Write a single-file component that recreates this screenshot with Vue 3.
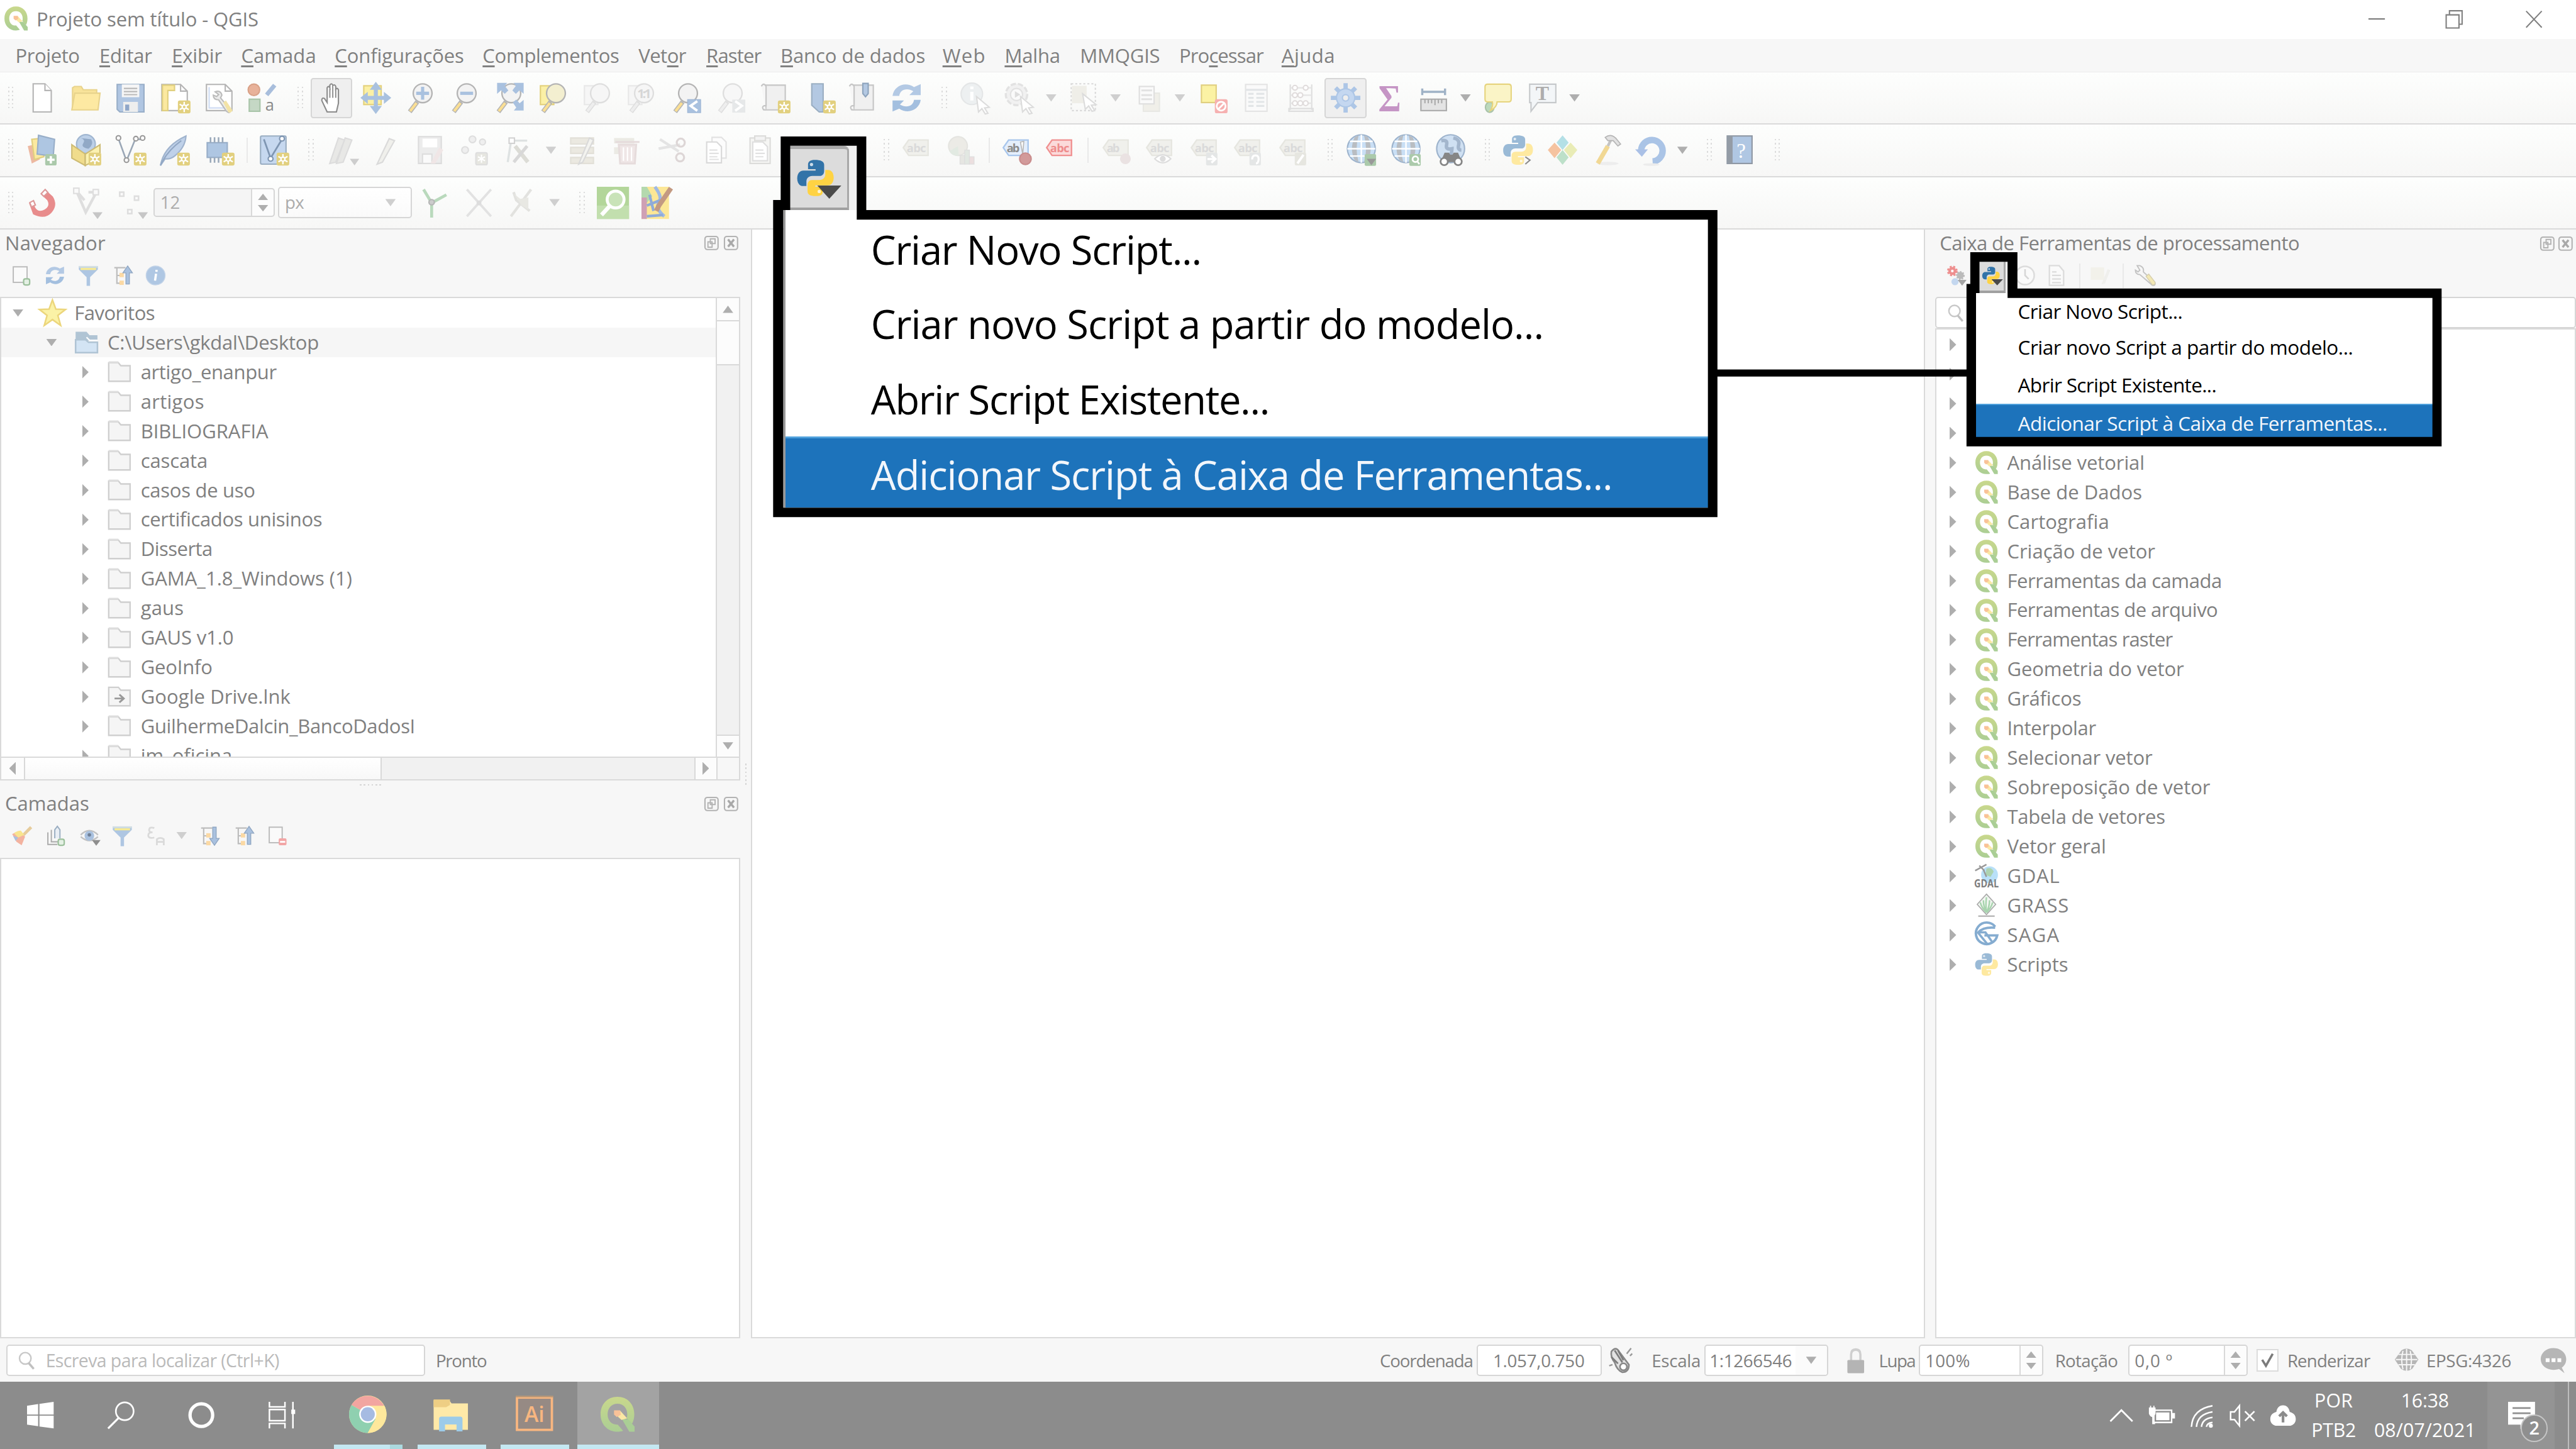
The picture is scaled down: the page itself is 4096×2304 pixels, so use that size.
<script setup>
import { h } from 'vue'

/* ---------- text fitting ---------- */
const ctx = document.createElement('canvas').getContext('2d')
const natural = (t) => {
  ctx.font = '400 100px "Open Sans"'
  return ctx.measureText(t).width / 100
}
// Single line of text tracked so that its glyphs span `w` pixels.
const Label = ({ text, w, size = 11.9, u = -1 }) => {
  const full = w + size * 0.1
  const ls = (full / size - natural(text)) / text.length
  const kids = u < 0 ? text : [text.slice(0, u), h('u', text[u]), text.slice(u + 1)]
  return h('span', { style: { fontSize: size + 'px', letterSpacing: ls + 'em', width: full + 'px', marginLeft: -size * 0.06 + 'px' } }, kids)
}
Label.props = ['text', 'w', 'size', 'u']

/* ---------- icons (24 × 24 grid) ---------- */
const star = '<rect x="14" y="14" width="9.4" height="9.6" rx="1.4" fill="#e2d07f"/><path d="M18.7 15v7.6M15.3 16.8l6.8 4M22.1 16.8l-6.8 4" stroke="#fff" stroke-width="1.1"/><circle cx="18.7" cy="18.8" r="1.5" fill="#e2d07f" stroke="#fff"/>'
const lens = (c = '#b4b4b4', f = '#f3f3f3', hd = '#fbdf93') =>
  `<path d="M9.6 15L4 22.4" stroke="${c}" stroke-width="3.4"/><path d="M9 15.8L4.3 21.9" stroke="${hd}" stroke-width="2"/><circle cx="13.6" cy="8.6" r="7" fill="${f}" stroke="${c}" stroke-width="1.1"/>`
const tag = (s, f, t, txt = 'abc') =>
  `<path d="M6 4.5h14.5v11.5H6L2 10.2z" fill="${f}" stroke="${s}" stroke-width="1.1"/><text x="4.6" y="13.6" font-size="8.6" font-weight="700" fill="${t}" textLength="${txt.length * 4.8}" font-family="Open Sans, sans-serif">${txt}</text>`
const dim = tag('#e6e6e0', '#f0f0ec', '#dadada')
const page = '<path d="M5.500 1.500h8.800l4.700 5v16H5.500z" fill="#fff" stroke="#b5b5b5"/><path d="M14.300 1.500v5h4.700" fill="#fff" stroke="#b5b5b5"/>'
const refresh = '<path d="M1.500 10.500C2.500 3 11-.5 17.500 4L22.500 1.800V10h-8.500l3-3C12 4 7 6 6.500 10.500z" fill="#b3c9e4"/><path d="M22.500 13.500C21.500 21 13 24.500 6.500 20L1.500 22.200V14H10l-3 3c5 3 10 1 10.500-3.500z" fill="#a3bfdf"/>'
const globe = '<circle cx="12" cy="11" r="10.400" fill="#c9dff5" stroke="#9db3cc"/><path d="M7 2.500q-4 8.500 0 17l3 1.500q-3-10 0-20zM17 2.500q4 8.500 0 17l-3 1.500q3-10 0-20z" fill="#b9bdc2"/><path d="M12 .6v20.800M1.600 11h20.800M3.500 5.500h17M3.500 16.500h17" stroke="#fff" stroke-width="1.100"/>'
const python = (a, b) => `<path d="M11.800 1C8.200 1 7.600 2.500 7.600 4v2.600h4.600v.9H4.800C2.500 7.500 1 9.300 1 12.200s1.300 4.700 3.600 4.700h2v-2.700c0-2 1.500-3.400 3.500-3.400h4.500c1.800 0 2.800-1.300 2.800-3V4c0-2-2-3-5.600-3z" fill="${a}"/><circle cx="9.700" cy="3.800" r="1" fill="#fff" fill-opacity=".75"/><path d="M12.400 23c3.600 0 4.200-1.500 4.200-3v-2.600H12v-.9h7.400c2.300 0 3.800-1.800 3.800-4.700s-1.300-4.700-3.600-4.700h-1.500v2.700c0 2-1.500 3.400-3.500 3.400h-4.500c-1.800 0-2.800 1.300-2.800 3V20c0 2 1.500 3 5.100 3z" fill="${b}"/><circle cx="14.400" cy="20.200" r="1" fill="#fff" fill-opacity=".75"/>`
const qgis = '<path d="M12 .8C5.500.8 1.200 5.600 1.200 12s4.300 11.200 10.800 11.200c1.600 0 2.600-.2 3.600-.6l-3.400-4C8.200 18.900 5.700 16 5.700 12S8.200 5.200 12 5.200s6.300 2.800 6.300 6.800c0 1-.1 1.700-.4 2.500l3.400 3.600c1-1.600 1.500-3.700 1.500-6.100C22.800 5.600 18.500.8 12 .8z" fill="url(#qg)"/><path d="M14.600 14.600l4.500.8L23 20v3.200h-3.400z" fill="#aace95"/><path d="M10.200 9.800h3.600l4.400 4.800-3.600 1-2-1.800z" fill="#fbe8a4"/><path d="M9.800 9.500h3.900l.5 2.800-2.600 1.500-1.800-1.600z" fill="#f9c298"/>'
const treeIcon = (arrow) => `<path d="M2 3h13M5 3v18h4M5 12h4" stroke="#bdbdbd" stroke-width="1.600" fill="none"/><rect x="8" y="9" width="5" height="5" fill="#fbd9a4"/><rect x="8" y="18" width="5" height="5" fill="#fbd9a4"/>${arrow}`
const arrowUp = '<path d="M17.500 1l5.500 8h-3.500v13h-4V9H12z" fill="#a9c1df" stroke="#8fa6c2"/>'
const arrowDown = '<path d="M17.500 23l5.500-8h-3.500V2h-4v13H12z" fill="#a9c1df" stroke="#8fa6c2"/>'
const funnel = '<path d="M1 1h22v4l-9 9v10h-4V14L1 5z" fill="#aec6e2"/><path d="M1 1h22v2H1z" fill="#d3dfe2"/><path d="M3 3.300h18v2.400H3z" fill="#f7ea94"/>'
const book = '<path d="M5 2.500h14.500v18.500H5z" fill="#f0f0f0" stroke="#c6c6c6"/><path d="M1.700 3.400q1.700-3.200 3.500 0v14.500H3.600q-1.900.8-.2 3H5" fill="#f6f6f6" stroke="#c6c6c6"/>'
const I = {
  qgis,
  new: page,
  open: '<path d="M2.500 20V4.500l1.500-1h5l1.500 2.500h10v4" fill="#f8e39a" stroke="#e8d38c"/><path d="M2 21L4.200 8.500H23L21.500 21z" fill="#fde9a2" stroke="#e8d38c"/>',
  save: '<path d="M2 2h20v20.500H4L2 20.500z" fill="#b0c6e2" stroke="#98aec8"/><rect x="5.500" y="2" width="13" height="9.500" fill="#f6f6f6"/><path d="M7 5h10M7 7.300h10M7 9.600h10" stroke="#b9b9b9"/><rect x="6.500" y="15" width="11" height="7.500" fill="#eee"/><rect x="8" y="17" width="3" height="4.500" fill="#8fa6c8"/>',
  layout: '<path d="M2 2h14l5 5v14.500H2z" fill="#fff" stroke="#b5b5b5"/><path d="M2.500 2.500h9v4h-5v15h-4z" fill="#fbe9a0" stroke="#e0cf7f"/><path d="M16 2v5h5" fill="none" stroke="#b5b5b5"/>' + star,
  manager: '<path d="M2 2h14l5 5v14.500H2z" fill="#fff" stroke="#b5b5b5"/><path d="M4 4v15.500h15" stroke="#cfdcf3" fill="none"/><path d="M16 2v5h5" fill="none" stroke="#b5b5b5"/><path d="M8.500 7.500q4-1.500 5 2.500l-1 2 7 8.500q1 2.500-1 2.500l-1.600-1-5.800-8.500q-4 0-4-3.500l2.500 1 1.500-1.500z" fill="#ececec" stroke="#bcbcbc"/><path d="M14.500 15.500l2-1.500 5 7.500-1.500 1.500h-1.500z" fill="#f3e3a6"/>',
  style: '<circle cx="5.500" cy="6" r="4.300" fill="#e8b29a" stroke="#d9a288"/><path d="M21 2.500l-6 7.300" stroke="#a8bedc" stroke-width="3.200"/><rect x="2" y="13" width="8" height="9" fill="#c5d8c5" stroke="#a8c4a8"/><text x="14" y="21.500" font-size="12" fill="#8a8a8a" font-family="Open Sans, sans-serif">a</text>',
  hand: '<path d="M7.500 22.500l-4-8.500q0-2.500 2-1.500l2 3V4.500q1-1.800 2 0v-2q1.200-2 2.200 0V3q1.300-1.500 2.200.5v2q1.300-1.300 2 .5V16l-1.500 6.500z" transform="translate(1.500 0)" fill="#fff" stroke="#8c8c8c"/><path d="M11 5v7M13.200 3.500V12M15.400 5v7" stroke="#8c8c8c" stroke-width=".9"/>',
  pan: '<rect x="3" y="3" width="13" height="14" fill="#fbf0a5" stroke="#e3d17c"/><path d="M12 0l4.500 6h-3v4.500H18v-3l5.500 4.500-5.500 4.500v-3h-4.500V18h3L12 24l-4.500-6h3v-4.500H6v3L.5 12 6 7.500v3h4.500V6h-3z" fill="#a9c1df"/>',
  zin: lens() + '<path d="M13.600 3.800v9.600M8.800 8.600h9.600" stroke="#a9c1df" stroke-width="2.400"/>',
  zout: lens() + '<path d="M8.800 8.600h9.600" stroke="#a9c1df" stroke-width="2.400"/>',
  zfull: lens() + '<path d="M3 .8h7.500L8.700 3l2.700 3.500L8.700 9 6 6.300 3 9zM22.800.8h-7.500L17 3l-2.600 3.500L17 9l2.800-2.700 3 2.700zM22.800 21.500h-7.300l1.800-2.300-2.600-3.700 2.600-2.300 2.500 2.800 3-2.500z" fill="#a9c1df"/>',
  zsel: '<rect x="2" y="3" width="10" height="14" fill="#fbf0a5" stroke="#e3d17c"/>' + lens('#b4b4b4', '#f3efd0'),
  zlayer: '<rect x="2" y="3" width="10" height="14" fill="#f6f6f6" stroke="#e8e8e8"/>' + lens('#dedede', '#f6f6f6', '#eee'),
  znative: '<rect x="2" y="3" width="10" height="14" fill="#f6f6f6" stroke="#e8e8e8"/>' + lens('#dedede', '#f6f6f6', '#eee') + '<text x="8.500" y="12" font-size="9.500" font-weight="700" fill="#d6d6d6" textLength="10.500" font-family="Open Sans, sans-serif">1:1</text>',
  zlast: lens() + '<rect x="13.300" y="13.300" width="9.700" height="9.700" fill="#a9c1df" stroke="#9fb7d5" stroke-width=".6"/><path d="M20.500 14.500L15.500 18l5 3.600" fill="none" stroke="#fff" stroke-width="1.800"/>',
  znext: lens('#dedede', '#f7f7f7', '#eee') + '<rect x="13.300" y="13.300" width="9.700" height="9.700" fill="#e6e8e9"/><path d="M15.500 14.500l5 3.500-5 3.600" fill="none" stroke="#fff" stroke-width="1.800"/>',
  newmap: book + star,
  newbm: '<path d="M5.500 1.500h8.500v21h-3l-5.500-5z" fill="#b3c8e2" stroke="#9aaec2"/>' + star,
  bms: book + '<path d="M11.700 1.200h4v7.600l-2 2.400-2-2.400z" fill="#b3c8e2" stroke="#8ea4bd"/>',
  refresh,
  ident: '<circle cx="9.500" cy="9" r="8" fill="#edf0f1" stroke="#e4e6e7"/><path d="M9.500 7.500v6.500M9.500 3.500v2" stroke="#fff" stroke-width="2.400"/><path d="M13 11l9.500 8-3.500.5 2.500 4-2 .5-2.500-4-2.500 2.500z" fill="#fff" stroke="#dcdcdc"/>',
  action: '<circle cx="10" cy="9.500" r="8" fill="#f1f1f1" stroke="#e2e2e2" stroke-width="1.600" stroke-dasharray="4 1.500"/><circle cx="10" cy="9.500" r="4.500" fill="#fafafa" stroke="#e2e2e2"/><path d="M8.800 7l4 2.500-4 2.500z" fill="#ddd"/><path d="M13 11l9.500 8-3.500.5 2.500 4-2 .5-2.500-4-2.500 2.500z" fill="#fff" stroke="#dcdcdc"/>',
  select: '<rect x="2.500" y="1.500" width="18" height="20" fill="none" stroke="#d9d9d9" stroke-dasharray="1.500 1.500"/><rect x="3" y="3" width="11" height="13" fill="#efeee8"/><path d="M11 9l10 8-3.500.5 2.500 4-2 .5-2.500-4-2.500 2.500z" fill="#fff" stroke="#dcdcdc"/>',
  selval: '<rect x="7.500" y="8.500" width="12" height="13.500" fill="#f0efe9" stroke="#e8e8e4"/><rect x="4.500" y="3.500" width="11" height="13" fill="#fafafa" stroke="#dfdfdf"/><path d="M6 6.500h8M6 10h8M6 13h8" stroke="#e2e2e2" stroke-width="1.400"/>',
  desel: '<rect x="2.500" y="2.500" width="11" height="13" fill="#fbf2a4" stroke="#e0cf7f"/><rect x="12.500" y="13" width="9.500" height="10.500" rx="1.500" fill="#f6b1b1"/><circle cx="17.200" cy="18.200" r="3.300" fill="none" stroke="#fff" stroke-width="1.300"/><path d="M15 20.500l4.500-4.600" stroke="#fff" stroke-width="1.300"/>',
  table: '<rect x="4" y="2" width="16" height="20" fill="#fafafa" stroke="#e4e4e4"/><path d="M4 6h16M6 9h4M12 9h6M6 12h4M12 12h6M6 15h4M12 15h6M6 18h4M12 18h6" stroke="#e2e5e7" stroke-width="1.500"/>',
  abacus: '<path d="M4.500 2v19M20.500 2v19M3.500 22h18v-2h-18z" fill="none" stroke="#dedede"/><path d="M4.500 4.500h16M4.500 10h16M4.500 16h16" stroke="#e5e5e5"/><g fill="#fff" stroke="#e0dcdc"><circle cx="8" cy="4.500" r="1.800"/><circle cx="16" cy="4.500" r="1.800"/><circle cx="8" cy="10" r="1.800"/><circle cx="12" cy="10" r="1.800"/><circle cx="8" cy="16" r="1.800"/><circle cx="12" cy="16" r="1.800"/><circle cx="16" cy="16" r="1.800"/></g>',
  gear: '<g stroke="#adc6e6" stroke-width="3.200"><path d="M12 1v22M1 12h22M4.500 4.500l15 15M19.500 4.500l-15 15"/></g><circle cx="12" cy="12" r="6.800" fill="#c4d7f0" stroke="#adc6e6"/><circle cx="12" cy="12" r="2.400" fill="#eee" stroke="#adc6e6"/>',
  sigma: '<text x="4" y="21.800" font-size="29" font-weight="700" fill="#c595c5" textLength="17" lengthAdjust="spacingAndGlyphs" font-family="Liberation Serif, serif">Σ</text>',
  ruler: '<path d="M3.500 7.500h17M3.500 5v5M20.500 5v5" stroke="#9fb2c6" stroke-width="1.600"/><rect x="2.500" y="13" width="19" height="8.500" fill="#e4e4e4" stroke="#ababab"/><path d="M5.500 13v3M8 13v3M10.500 13v3M13 13v4.500M15.500 13v3M18 13v3" stroke="#ababab"/>',
  tip: '<ellipse cx="5.500" cy="19" rx="3.200" ry="3.800" fill="#bcd9bc" stroke="#a9c2a9"/><path d="M4 1.800h15.500q2 0 2 2V13q0 2-2 2H11q0 4-5 6.500 2.200-3.500 1.500-6.500H4q-2 0-2-2V3.800q0-2 2-2z" fill="#faf4c6" stroke="#e6d47e"/>',
  ttext: '<path d="M2 1.800h19.500V15.500H8L3 22V15.500H2z" fill="#f3f6f8" stroke="#c6c9cb"/><text x="6.400" y="13.600" font-size="15" font-weight="700" fill="#adadad" font-family="Liberation Serif, serif">T</text>',
  srcmgr: '<path d="M1 9l9-2v12l-6 3z" fill="#edb9a2"/><path d="M4 4l9-1v14l-7 2z" fill="#fbe9a0" stroke="#e0cf7f"/><path d="M9 1l12 3-1 12.500-12-1.500z" fill="#aec6e2" stroke="#98aec8"/><rect x="14" y="15" width="8.500" height="8.500" rx="1.200" fill="#abc9ab"/><path d="M18.200 16.500v5.500M15.500 19.200H21" stroke="#fff" stroke-width="1.700"/>',
  gpkg: '<circle cx="12" cy="7.500" r="7" fill="#bcd0e8" stroke="#a0b6d0"/><path d="M8 3q4 1 2 4t4 4q4-3 2-7" fill="#91a9c6"/><path d="M1.500 8l10 7v8.500l-10-5.500z" fill="#f0dc8c" stroke="#cdbb74"/><path d="M22.500 8l-11 7v8.500l11-5.500z" fill="#fbf1b1" stroke="#cdbb74"/>' + star,
  shp: '<path d="M2.500 3.500L8.500 20 15 4h5" fill="none" stroke="#9aa7b6" stroke-width="1.200"/><g fill="#fff" stroke="#9a9a9a"><circle cx="2.500" cy="3" r="1.700"/><circle cx="8.500" cy="19.500" r="1.700"/><circle cx="15.500" cy="3.500" r="1.700"/><circle cx="20.500" cy="3" r="1.700"/></g>' + star,
  spatialite: '<path d="M1.500 23.500Q4 9 20.500 1.500 20 10 12 16.500q-3 2.500-7 2z" fill="#bfd1e9" stroke="#9fb3cd"/><path d="M1.500 23.500Q6 13 17 5" fill="none" stroke="#91a7c4"/>' + star,
  virtual: '<rect x="3" y="6.500" width="15" height="11" fill="#aec6e2" stroke="#98aec8"/><path d="M5.500 2.500v4M8.500 2.500v4M11.500 2.500v4M14.500 2.500v4M5.500 17.500v4M8.500 17.500v4M11.500 17.500v4" stroke="#9aa9ba" stroke-width="1.200"/>' + star,
  vlayer: '<rect x="2" y="1.500" width="19" height="21" rx="1" fill="#c6d8ef" stroke="#9aaec2"/><path d="M4.500 4L9.500 18 18 4" fill="none" stroke="#7f96b2" stroke-width="1.300"/><circle cx="9.500" cy="18.500" r="1.800" fill="#fff" stroke="#7f96b2"/><circle cx="18" cy="3.500" r="1.800" fill="#fff" stroke="#7f96b2"/>' + star,
  edits: '<path d="M2 22L8.500 3l4.500 1.500L6.500 21zM7 22l6.500-19 5 1.500L12 21z" fill="#e8e8e6" stroke="#dcdcdc"/><path d="M17 18.500h7l-3.500 5z" fill="#cdcdcd"/>',
  pencil: '<path d="M4.500 22.500L13.500 3.500l4 1.500L8.500 21z" fill="#f0f0ec" stroke="#dadada"/>',
  savee: '<path d="M3 2h17v20H3z" fill="#ececec" stroke="#dcdcdc"/><rect x="6" y="3.500" width="11" height="6.500" fill="#fff"/><rect x="6" y="15" width="7" height="7" fill="#fafafa" stroke="#ddd"/><path d="M12 22l6.500-12 3 2-6 10z" fill="#f0e6e6"/>',
  addpt: '<g fill="#efefef" stroke="#dedede"><circle cx="9.500" cy="4" r="2.500"/><circle cx="17" cy="6" r="2.200"/><circle cx="4" cy="12" r="2.500"/><rect x="12" y="14" width="8.500" height="9" rx="1.200" fill="#e6e6e0"/></g><path d="M16.200 15.500v6M13.600 17l5.200 3M18.800 17l-5.200 3" stroke="#fff"/>',
  vertex: '<path d="M5 5L2.500 21M6 5h11" stroke="#dee2e2" stroke-width="1.600" fill="none"/><path d="M8 9l9.500 12" stroke="#dcdcd6" stroke-width="3"/><path d="M17 9L7 21" stroke="#d8d8d8" stroke-width="2.400"/><rect x="3.500" y="3" width="4" height="4" fill="#fff" stroke="#d2d2d2"/>',
  modify: '<path d="M3 3h17v4.500H3zM3 10h17v4.500H3zM3 17.500h17V22H3z" fill="#ebe9e1" stroke="#e2e0d8"/><path d="M9 22.500L17 3l3 1.500L12 21z" fill="#f3f3ef" stroke="#d9d9d9"/>',
  trash: '<path d="M3 3h15v4H3zM3 10h6v5H3z" fill="#ebeae4"/><path d="M4 6h18M6.500 8h13L18.500 22h-11z" fill="#efe6e6" stroke="#e6dcdc" stroke-width="1.400"/><path d="M10 10v10M13 10v10M16 10v10" stroke="#fff"/>',
  cut: '<path d="M3 4l14 9M2 11l16-3" stroke="#e4e4e4" stroke-width="2"/><circle cx="18.500" cy="6.500" r="3" fill="none" stroke="#ddd6d6" stroke-width="1.500"/><circle cx="18" cy="17.500" r="3" fill="none" stroke="#ddd6d6" stroke-width="1.500"/>',
  copy: '<path d="M9 2.500h7l3.500 3.500v12H9z" fill="#fcfcfc" stroke="#e2e2e2"/><path d="M5 6h7.500L16 9.500V21.500H5z" fill="#fff" stroke="#d9d9d9"/><path d="M7 12h6M7 14.500h7M7 17h6M7 19h7" stroke="#e2e2e2"/>',
  paste: '<rect x="4.500" y="3" width="15" height="19" fill="#f6f6f4" stroke="#dcdcda"/><rect x="8" y="1.500" width="8" height="3.500" fill="#f3f3f3" stroke="#dcdcda"/><path d="M6.500 6h7.500l3.500 3.500V20h-11z" fill="#fff" stroke="#dedede"/><path d="M8.500 12h6M8.500 14.500h7M8.500 17h6" stroke="#e2e2e2"/>',
  abc: dim,
  pie: '<circle cx="9.500" cy="9" r="7" fill="#ecebe6" stroke="#e4e4e0"/><path d="M9.500 9L3 13a7 7 0 0 0 7 3z" fill="#e2eae2"/><rect x="11" y="16" width="3.500" height="6.500" fill="#e6e6e2" stroke="#dedede" stroke-width=".6"/><rect x="14.500" y="12" width="3.500" height="10.500" fill="#e2e8e2" stroke="#dedede" stroke-width=".6"/><rect x="18" y="17" width="3.500" height="5.500" fill="#ecdfdf" stroke="#dedede" stroke-width=".6"/>',
  abpin: tag('#a8c6ec', '#e4eefb', '#8c8c8c', 'ab') + '<path d="M16.500 15L14.800 6l2.500-.5z" fill="#fff" stroke="#b8b8b8" stroke-width=".8"/><circle cx="18.500" cy="18.500" r="4.300" fill="#d29a9a" stroke="#c98c8c"/>',
  abcred: tag('#f09090', '#fbdada', '#ee8c8c'),
  lpin: tag('#e6e6e0', '#f0f0ec', '#dadada', 'ab') + '<circle cx="18.500" cy="18.500" r="4" fill="#eae2e2"/>',
  leye: dim + '<path d="M8 18.500q6-6 12 0-6 6-12 0z" fill="#fff" stroke="#ddd"/><circle cx="14" cy="18.500" r="2.200" fill="#ddd"/>',
  lmove: dim + '<rect x="13" y="14" width="8.500" height="9.500" rx="1" fill="#e4e6e6"/><path d="M14 18.700h5M17 16l3 2.700-3 2.800" stroke="#fff" stroke-width="1.600" fill="none"/>',
  lrot: dim + '<rect x="13" y="14" width="8.500" height="9.500" rx="1" fill="#e4e6e6"/><path d="M15 19q0-3 2.500-3t2.300 3-2 3" stroke="#fff" stroke-width="1.500" fill="none"/>',
  ledit: dim + '<rect x="13" y="14" width="8.500" height="9.500" rx="1" fill="#e6e6e0"/><path d="M15 22l4.500-6.500" stroke="#fff" stroke-width="1.800"/>',
  gdown: globe + '<rect x="14.500" y="15" width="8.500" height="8.800" rx="1" fill="#abcaab"/><path d="M16 18.500h7l-3.500 4.800z" fill="#999"/>',
  gfind: globe + '<rect x="14.500" y="15" width="8.500" height="8.800" rx="1" fill="#abcaab"/><circle cx="19" cy="18.800" r="2.100" fill="none" stroke="#fff" stroke-width="1.300"/><path d="M20.500 20.500l1.500 2" stroke="#fff" stroke-width="1.300"/>',
  gbin: '<circle cx="12" cy="11" r="10.400" fill="#cfe0f2" stroke="#9db3cc"/><path d="M5 5q5-1 4 3t4 3q0 5-4 7M14 3q5 1 4 5t2 4" fill="none" stroke="#a3b6cd" stroke-width="2.600"/><path d="M7.500 14h3.200l1 1.500h1.600l1-1.500h3.200l3 7H4.500z" fill="#868686"/><g fill="#fff" stroke="#868686" stroke-width="1.300"><circle cx="7.200" cy="20.600" r="2.700"/><circle cx="17.600" cy="20.600" r="2.700"/></g>',
  pycon: python('#9abad6', '#fee9a0') + '<path d="M17.500 17l3.500 2.500-3.500 3" fill="none" stroke="#8c8c8c"/>',
  plugin: '<path d="M12 1l4.500 5.500L12 12 7.500 6.500z" fill="#b4e0e6"/><path d="M6 6.500L11 12l-5 6-5-6z" fill="#f5c3a0"/><path d="M18 6.500L23 12l-5 6-5-6z" fill="#e9ecb6"/><path d="M12 12l4.500 5.500L12 23l-4.500-5.500z" fill="#bde0c9"/>',
  hammer: '<ellipse cx="12" cy="22" rx="8" ry="1.300" fill="#ededed"/><path d="M4.500 22L12 9" stroke="#f1d894" stroke-width="3.400"/><path d="M12 9l2.500-5" stroke="#c4c4c4" stroke-width="2"/><path d="M10 2.500Q15-1 19 4.500l2.500 3-2 1.500L16 5 12 5z" fill="#e2e2e2" stroke="#b5b5b5" stroke-width=".8"/>',
  undo: '<path d="M4.500 12A8 8 0 1 1 13 20.500" fill="none" stroke="#aac4e6" stroke-width="4.800"/><path d="M0 11.500h9.500L5 17z" fill="#aac0e6"/><ellipse cx="12" cy="22.800" rx="6" ry="1" fill="#ececec"/>',
  help: '<rect x="3" y="1.500" width="18.500" height="20.500" fill="#b0c7e3" stroke="#8f98a4"/><rect x="3" y="1.500" width="4" height="20.500" fill="#949ca6"/><text x="10" y="18" font-size="15.500" fill="#fff" font-family="Liberation Serif, serif">?</text>',
  magnet: '<path d="M5.500 15.500q2.500 4 7 1.500t2-7L9.700 5.500l3.600-3.200 5.400 5q4 6.500-1 12T4 20.500L1 12.300l3-1.600z" transform="translate(1 0)" fill="#e88c8c"/><path d="M11 5.200l3-3.200 2 2.200-3 3zM2.500 11.800l2.800-1.500 1.400 3.300L3.800 15z" fill="#fff" stroke="#d99"/>',
  snapv: '<path d="M3 3l7 16L18 4M3 3l6 7M12 4h8" fill="none" stroke="#dedede" stroke-width="2"/><g fill="#fafafa" stroke="#dedede"><rect x="1" y="1" width="4" height="4"/><rect x="15.500" y="2" width="4" height="4"/></g><path d="M15 19h7.500l-3.700 5z" fill="#c6c6c6"/>',
  snapd: '<g fill="#fafafa" stroke="#dedede" stroke-width="1.200"><rect x="3" y="4" width="3" height="3"/><rect x="14" y="7" width="3" height="3"/><rect x="9" y="17" width="3" height="3"/></g><path d="M16.500 19H24l-3.700 5z" fill="#c6c6c6"/>',
  topo: '<path d="M4 2l6 10v11M10 12l11-6" fill="none" stroke="#b9d9bc" stroke-width="2.200"/><circle cx="10" cy="11.500" r="2" fill="#ccc" stroke="#b5b5b5"/>',
  cross: '<path d="M3 2l18 20M21 2L3 22" stroke="#e2e2e2" stroke-width="1.800"/><circle cx="12" cy="12" r="1.800" fill="#ddd"/>',
  selfsnap: '<path d="M5 4l2 6 10 8M18 2L3 22" stroke="#e2e2df" stroke-width="2" fill="none"/><path d="M5 5l5 4 6-1v9l-5-3z" fill="#e8e8e3"/>',
  gmag: '<rect width="24" height="24" fill="#b3d69a"/><rect y="14" width="24" height="10" fill="#c2dfae"/><circle cx="14" cy="9.500" r="6.300" fill="#c9e3b8" stroke="#fff" stroke-width="2.200"/><path d="M9.500 14.500L3.500 21" stroke="#fff" stroke-width="3"/>',
  gmap: '<rect x="0" y="0" width="20.500" height="24" fill="#fce796"/><path d="M0 0h4l4 7-4 5H0z" fill="#b4d9ae"/><path d="M0 8h4v16H0z" fill="#cfa0b4"/><path d="M10 0q6 8 3 12t4 10" stroke="#9fb9e4" stroke-width="2.500" fill="none"/><path d="M4 14l10-4M6 6l3 12M4 22l12-1" stroke="#8fabd8" stroke-width="2" fill="none"/><path d="M22 1L13 14l-2 4" stroke="#c39a82" stroke-width="3.600"/>',
  addl: '<rect x="3" y="2" width="16" height="18" fill="#fafafa" stroke="#bababa" stroke-width="1.400"/><rect x="15" y="16" width="7" height="7" rx="2" fill="#e4f0e4" stroke="#9cc09c" stroke-width="1.600"/>',
  funnel, up: treeIcon(arrowUp), down: treeIcon(arrowDown),
  info: '<circle cx="12" cy="12" r="11" fill="#afc7e3" stroke="#c4d4e8"/><path d="M12.500 10l-1.200 8M13 5.500v2.400" stroke="#fff" stroke-width="2.600"/>',
  brush: '<path d="M23 2l-9 9" stroke="#e6cc9c" stroke-width="3.500"/><path d="M1 10q5-3 10-1l5 4-4 10-6-4z" fill="#f3b3a0"/><path d="M3 9q4-3 8-3l4 5-7 3z" fill="#f9e48e"/><path d="M2 12l6 2-3 4z" fill="#a9c1df"/>',
  group: '<path d="M3 8v14h11M7 5v14h11" fill="none" stroke="#aaa" stroke-width="1.400"/><path d="M11 15V5l3-4 3 4v10" fill="#e9eef4" stroke="#9aaec2" stroke-width="1.400"/><rect x="15" y="16" width="7" height="7" rx="2" fill="#e4f0e4" stroke="#9cc09c" stroke-width="1.600"/>',
  eye: '<path d="M1 11Q11 1 21 11M1 13q10 9 20 0" fill="none" stroke="#c2c2c2" stroke-width="1.800"/><circle cx="11" cy="12" r="5.600" fill="#a9c1df"/><circle cx="11" cy="11" r="2" fill="#6f7f95"/><path d="M14 17h10l-5 6.500z" fill="#8e8e8e"/>',
  eps: '<path d="M9 3Q3 1 3 5.500q0 2.500 4 2.500-5 0-5 3.500 0 4 7 2.500M12 23v-7q4-3 8 0v7M12 19h8" fill="none" stroke="#dadada" stroke-width="2"/>',
  removel: '<rect x="3" y="2" width="15" height="18" fill="#fafafa" stroke="#bababa" stroke-width="1.400"/><rect x="14" y="15" width="9" height="8" rx="1.500" fill="#f2a6a6"/><path d="M15.500 19h6" stroke="#fff" stroke-width="2"/>',
  gears: '<circle cx="8" cy="7" r="4.500" fill="#ee8f8f" stroke="#ee8f8f" stroke-width="3" stroke-dasharray="2 1.600"/><circle cx="8" cy="7" r="1.500" fill="#fff"/><circle cx="17" cy="12" r="4" fill="#bbb" stroke="#bbb" stroke-width="2" stroke-dasharray="1.500 1.500"/><circle cx="11" cy="19" r="4" fill="#c4d7ef"/><path d="M14 17h10l-5 6.500z" fill="#a5a5a5"/>',
  clock: '<circle cx="12" cy="12" r="10.300" fill="#fafafa" stroke="#dcdcdc" stroke-width="1.800"/><path d="M12 5v7l4 4" fill="none" stroke="#d6d6d6" stroke-width="1.800"/>',
  doc: '<path d="M4 1h11l5 6v16H4z" fill="#fafafa" stroke="#dcdcdc" stroke-width="1.600"/><path d="M7 8h5M7 12h10M7 16h10M7 20h10" stroke="#dcdcdc" stroke-width="1.600"/>',
  editp: '<rect x="1" y="3" width="15" height="14" fill="#f2f1ea"/><path d="M13 22L20 5l3 1-6 15z" fill="#efefec"/>',
  wrench: '<path d="M3 1l3 5-2 2-3-2q0 5 5 5L20 23q4 1 3-3L10 8q1-5-4-7z" fill="#f6f6f6" stroke="#c2c2c2" stroke-width="1.300"/><path d="M13 13l3-2.500 7 9q1 3.500-3 3z" fill="#f3e8b4" stroke="#d6cfae"/>',
  mag: '<circle cx="10.500" cy="9.500" r="6.800" fill="none" stroke="#c8c8c8" stroke-width="1.800"/><path d="M14.500 15l6 7" stroke="#c0c0c0" stroke-width="2.600"/>',
  starf: '<path d="M12 .5l3 8.200 8.600.3-6.800 5.300 2.500 8.900L12 18l-7.300 5.200 2.500-8.900L.4 9l8.600-.3z" fill="#fbf2a6" stroke="#ecd67c" stroke-width="1.400"/>',
  folder: '<path d="M1 21.500V2.500h10l2.500 3H23v16z" fill="#f5f5f5" stroke="#cfcfcf" stroke-width="1.500"/><path d="M1 2h10" stroke="#dedede" stroke-width="2"/>',
  folderb: '<path d="M1 1h11l3 3.500h8V10H1z" fill="#b0c4d4"/><path d="M1 22V9h10l3 2.500h9V22z" fill="#d3e4f4" stroke="#b0c4d4" stroke-width="1.600"/><path d="M12 6.500l3 3h8" fill="none" stroke="#fff" stroke-width="1.400"/>',
  folderl: '<path d="M1 21.500V2.500h10l2.500 3H23v16z" fill="#f5f5f5" stroke="#cfcfcf" stroke-width="1.500"/><path d="M7 14h8M12 10l4.500 4-4.500 4" fill="none" stroke="#999" stroke-width="1.900"/>',
  gdal: '<circle cx="15" cy="11" r="8.200" fill="#b9e0f8"/><path d="M12 5q5-2 7 3l-3 5-5-2z" fill="#add3b0"/><path d="M1 7L12 1M5 2l5 5M9 6l3 7" stroke="#999" stroke-width="1.500"/><text x="0" y="23.500" font-size="10.500" font-weight="700" fill="#7e7e7e" textLength="24" lengthAdjust="spacingAndGlyphs" font-family="Open Sans, sans-serif">GDAL</text>',
  grass: '<path d="M12 1l9 10-9 10L3 11z" fill="#f2f7f2" stroke="#a9a9a9"/><path d="M12 19q-1-7 0-15M12 19Q7 14 6 9M12 19q5-5 6-10M12 19q-3-6-3-12M12 19q3-6 3-12" stroke="#a8d4ae" stroke-width="1.500" fill="none"/><path d="M4 22.500h16" stroke="#bbb" stroke-width="1.600"/>',
  saga: '<path d="M20.500 4A10.500 10.500 0 1 0 22.500 12.500H10" fill="none" stroke="#85acd0" stroke-width="2.400"/><path d="M20.500 5Q9 4 4 9.500h7l7 10M4 10l9 11" fill="none" stroke="#85acd0" stroke-width="2.200"/>',
  py: python('#9abad6', '#fee9a0'),
  pyfull: python('#3273a8', '#ffd343'),
  compass: '<path d="M3 4q4-5 7 0l9 12q0 7-6 7-5-2-7-9-4-5-3-10z" fill="#e2e2e2" stroke="#888" stroke-width="1.500"/><path d="M6 3l7 11M3 9l6 6M9 3l5 9" stroke="#7d7d7d" stroke-width="1.600"/><circle cx="14" cy="18" r="3.200" fill="#fff" stroke="#888" stroke-width="1.500"/><path d="M17 6l4-5M20 8l2-2M1 17l3-1" stroke="#999" stroke-width="1.400"/>',
  lock: '<path d="M7 12V6.500q0-4.800 5-4.800t5 4.800V12" fill="none" stroke="#cfcfcf" stroke-width="2.400"/><rect x="3" y="11.500" width="18" height="12.300" rx="1" fill="#b4b4b4"/>',
  crs: '<path d="M7 2.500Q12-1 17 2.500l6.500 9-6 9q-5.500 4-11 0l-6-9z" fill="#b6b6b6"/><path d="M8.500 3q-2.500 9 0 18M15.500 3q2.500 9 0 18M4 6.500h16M1.500 11.500h21M4 16.500h16M12 1v22" stroke="#f7f7f7" stroke-width="1.200"/>',
  bubble: '<path d="M12 .8c6.500 0 11.500 4.500 11.500 10 0 3.500-1.500 6-4 7.700L22 23.500l-5-3.800q-2.500.8-5 .8C5.500 20.500.5 16.500.5 10.800S5.500.8 12 .8z" fill="#b6b6b6"/><path d="M5 10h3.500v3.500H5zM10.300 10h3.500v3.500h-3.500zM15.600 10H19v3.500h-3.400z" fill="#fff"/>',
  win: '<path d="M0 3.500L10 2v9.500H0zM11.200 1.800L24 0v11.500H11.200zM0 12.500h10V22L0 20.500zM11.200 12.500H24V24l-12.800-1.800z" fill="#fff"/>',
  tsearch: '<circle cx="15.500" cy="8.500" r="8" fill="none" stroke="#fff" stroke-width="1.500"/><path d="M10 14.500L.5 24" stroke="#fff" stroke-width="1.800"/>',
  cortana: '<circle cx="12" cy="12" r="10.200" fill="none" stroke="#fff" stroke-width="3"/>',
  tview: '<path d="M.8 0v4.500h14V0M.8 24v-4.500h14V24M.8 7h14v10H.8zM22 0v24" fill="none" stroke="#fff" stroke-width="1.400"/><rect x="20.500" y="7" width="3.500" height="4" fill="#fff"/>',
  chrome: '<circle cx="12" cy="12" r="12" fill="#fee89c"/><path d="M12 12L1.600 6A12 12 0 0 1 22.400 6.500z" fill="#f2a5a0"/><path d="M12 12L1.600 6A12 12 0 0 0 12 24l5-9z" fill="#8fd0b0"/><path d="M12 6.500h10.700A12 12 0 0 1 12 24l5-9z" fill="#fee89c"/><circle cx="12" cy="12" r="5.500" fill="#fff"/><circle cx="12" cy="12" r="4.500" fill="#a6bbe2"/>',
  explorer: '<path d="M1 3h10l1.500 2H23v17H1z" fill="#fee9a8"/><path d="M1 2.500h10.500V6L9 7.500H1z" fill="#eece84"/><path d="M4.500 23v-8q0-1.500 1.500-1.500h12q1.500 0 1.500 1.500v8h-3.800v-4.500H8.300V23z" fill="#9ccbe9"/>',
  ai: '<rect x=".8" y="1.300" width="22.400" height="20.700" fill="#968a84" stroke="#f8b680" stroke-width="1.500"/><path d="M0 .6h24" stroke="#b89878" stroke-width="1"/><text x="5.600" y="16.800" font-size="14" font-weight="600" fill="#f8b680" textLength="12.800" lengthAdjust="spacingAndGlyphs" font-family="Open Sans, sans-serif">Ai</text>',
  chev: '<path d="M2 17L12 7l10 10" fill="none" stroke="#fff" stroke-width="1.600"/>',
  batt: '<path d="M5 7h16v11H5z" fill="none" stroke="#fff" stroke-width="1.300"/><rect x="7" y="9" width="12" height="7" fill="#fff"/><path d="M22 10h1.500v4H22zM1 5h5v5q-1 2.500-2.500 2.500T1 10zM3 12h1v7h2M2 5V3M5 5V3" fill="#fff" stroke="#fff"/>',
  wifi: '<path d="M2 22Q3 6 21 3M6.500 22Q7.500 10.500 21 8.500M11 22q1-7.500 10-8.500M15.500 22q.5-3.500 5.500-4" fill="none" stroke="#fff" stroke-width="1.400"/><circle cx="19.500" cy="21" r="1.800" fill="#fff"/>',
  mute: '<path d="M1 8.500h3.500L9 3v18l-4.500-5.500H1z" fill="none" stroke="#fff" stroke-width="1.400"/><path d="M14 8l8.500 8.500M22.500 8L14 16.500" stroke="#fff" stroke-width="1.500"/>',
  cloud: '<path d="M12 2.500c3.500 0 5.500 2.500 6 6 3.500 1 5.500 3 5.500 6.500s-2.500 6-6 6H6.500c-3.500 0-6-2.500-6-6s2-5.500 5.500-6.500c.5-3.500 2.500-6 6-6z" fill="#fff"/><path d="M12 18V10M8.500 12.500L12 9l3.500 3.500" fill="none" stroke="#8c8c8c" stroke-width="2.400"/>',
  note: '<path d="M0 0h24v20h-9l-4 4v-4H0z" fill="#fff"/><path d="M4 5.500h16M4 10h16M4 14.500h10" stroke="#8f8f8f" stroke-width="1.500"/>',
  float: '<rect x="1" y="1" width="22" height="22" rx="4" fill="none" stroke="#b3b3b3" stroke-width="2.200"/><path d="M10 5h8v8h-8zM6 10h7v9H6z" fill="none" stroke="#b3b3b3" stroke-width="2"/>',
  close: '<rect x="1" y="1" width="22" height="22" rx="4" fill="none" stroke="#b3b3b3" stroke-width="2.200"/><path d="M7 6l10 12M17 6L7 18" stroke="#a9a9a9" stroke-width="3.600"/>',
  check: '<path d="M5 11l5 8L19 3" fill="none" stroke="#7b7b7b" stroke-width="3"/>',
}

/* ---------- strips: [kind, centre, width?] laid out one after the other ---------- */
const widths = { ':': 3.4, '|': 0.8, v: 6.4 }
const strip = (list, size = 19.6, origin = 0) => {
  let end = origin
  return list.map(([k, x, w]) => {
    const width = w || widths[k] || size
    const gap = x - width / 2 - end
    end = x + width / 2
    return { k, box: { width: width + 'px', marginLeft: gap + 'px' } }
  })
}
const toolbars = [
  strip([[':', 6.6], ['new', 25.4], ['open', 52], ['save', 79.3], ['layout', 106.5], ['manager', 133.8], ['style', 160], [':', 183], ['hand', 201.8, 25.4], ['pan', 228.9], ['zin', 255.9], ['zout', 282.900], ['zfull', 310], ['zsel', 337], ['zlayer', 363.9], ['znative', 390.7], ['zlast', 417.5], ['znext', 444.8], ['newmap', 472], ['newbm', 499.500], ['bms', 525.5], ['refresh', 552.2], [':', 575], ['ident', 593.6], ['action', 620.6], ['v', 640], ['select', 660], ['v', 679.2], ['selval', 699.8], ['v', 718.4], ['desel', 739.3], ['table', 765], ['abacus', 791.8], ['gear', 819.2, 25.8], ['sigma', 845.9], ['ruler', 872.9], ['v', 892.3], ['tip', 912.4], ['ttext', 939.5], ['v', 958.7]]),
  strip([[':', 6.6], ['srcmgr', 25.7], ['gpkg', 52.3], ['shp', 79.800], ['spatialite', 106.2], ['virtual', 133.500], ['|', 150.6], ['vlayer', 166.8], [':', 189.5], ['edits', 208.8], ['pencil', 235.7], ['savee', 262], ['addpt', 289.6], ['vertex', 316.8], ['v', 335.5], ['modify', 355], ['trash', 381.4], ['cut', 409.3], ['copy', 436], ['paste', 462.8], [':', 539.7], ['abc', 558], ['pie', 585.4], ['|', 602.5], ['abpin', 619], ['abcred', 645.5], ['|', 662.6], ['lpin', 679.8], ['leye', 706.3], ['lmove', 733.4], ['lrot', 760], ['ledit', 787.4], [':', 810], ['gdown', 829], ['gfind', 856], ['gbin', 883.2], [':', 905.6], ['pycon', 924.4], ['plugin', 951.5], ['hammer', 979], ['undo', 1005.3], ['v', 1024.4], [':', 1040.9], ['help', 1059.1], [':', 1082.2]]),
  strip([[':', 6.6], ['magnet', 25.7], ['snapv', 54], ['snapd', 80.3], ['spin', 130.4, 74], ['combo', 210, 81.4], ['topo', 264.500], ['cross', 291.7], ['selfsnap', 318.4], ['v', 337.6], [':', 354.5], ['gmag', 373.2], ['gmap', 400.3]]),
]
const active = ['hand', 'gear']
const navTools = strip([['addl', 12.9], ['refresh', 33.6], ['funnel', 53.8], ['up', 74.9], ['info', 94.8]], 12.6)
const layerTools = strip([['brush', 13.1], ['group', 34], ['eye', 55], ['funnel', 74.6], ['eps', 95.7], ['v', 110.6], ['down', 127.8], ['up', 148.6], ['removel', 168.8]], 12.6)
const boxTools = strip([['gears', 1190.5], ['clock', 1232.8], ['doc', 1251.8], ['|', 1266], ['editp', 1278.7], ['|', 1292.5], ['wrench', 1305.8]], 13, 1171.8)

const menu = [['Projeto', 10.1, 48, 3], ['Editar', 61.2, 92.1, 0], ['Exibir', 105.3, 134.7, 0], ['Camada', 147.5, 192, 0], ['Configurações', 204.5, 282, 0], ['Complementos', 294.5, 376.5, 0], ['Vetor', 389.4, 417.2, 3], ['Raster', 430.7, 462.9, 0], ['Banco de dados', 475.8, 562.8, 0], ['Web', 574.5, 599.8, 0], ['Malha', 612.3, 645, 0], ['MMQGIS', 658.2, 705.7, -1], ['Processar', 718.6, 768.6, 3], ['Ajuda', 780.9, 812.3, 0]]
  .map(([text, a, b, u]) => ({ text, a, w: b - a, u }))

const tree = [['artigo_enanpur', 81.5], ['artigos', 37.5], ['BIBLIOGRAFIA', 76.5], ['cascata', 39.5], ['casos de uso', 68.5], ['certificados unisinos', 109.300], ['Disserta', 42.5], ['GAMA_1.8_Windows (1)', 127.5], ['gaus', 25], ['GAUS v1.0', 55.300], ['GeoInfo', 42.500], ['Google Drive.lnk', 90], ['GuilhermeDalcin_BancoDadosI', 165.8], ['im_oficina', 54.5]]
const tools = [['', 0], ['', 0], ['', 0], ['', 0], ['Análise vetorial', 82.5], ['Base de Dados', 81], ['Cartografia', 61], ['Criação de vetor', 89], ['Ferramentas da camada', 129.5], ['Ferramentas de arquivo', 127], ['Ferramentas raster', 99.5], ['Geometria do vetor', 106.5], ['Gráficos', 44], ['Interpolar', 53], ['Selecionar vetor', 87.3], ['Sobreposição de vetor', 122.5], ['Tabela de vetores', 95], ['Vetor geral', 59], ['GDAL', 31], ['GRASS', 36.5], ['SAGA', 31], ['Scripts', 36]]
const toolIcon = { GDAL: 'gdal', GRASS: 'grass', SAGA: 'saga', Scripts: 'py' }
const actions = [['Criar Novo Script...', 99], ['Criar novo Script a partir do modelo...', 202.8], ['Abrir Script Existente...', 119.6], ['Adicionar Script à Caixa de Ferramentas...', 223.7]]
</script>

<template>
  <div class="screen">
    <svg class="defs"><defs><linearGradient id="qg" x1="0" y1="0" x2="0" y2="1"><stop offset="0" stop-color="#c9d88c" /><stop offset="1" stop-color="#abce94" /></linearGradient></defs></svg>

    <header class="title">
      <svg class="logo" viewBox="0 0 24 24" v-html="I.qgis" />
      <Label class="lbl" text="Projeto sem título - QGIS" :w="134" />
      <svg class="winbtns" viewBox="0 0 110 12"><path d="M0 5.800h10M47.300 3.300h7.800v8h-7.800zM49.300 3.300V.8h7.700v8.200h-1.900M96 1l9.500 10M105.500 1l-9.500 10" /></svg>
    </header>

    <nav class="menubar">
      <div v-for="(m, i) in menu" :key="m.text" class="entry" :style="{ marginLeft: m.a - (i ? menu[i - 1].a + menu[i - 1].w : 0) + 'px', width: m.w + 'px' }">
        <Label class="lbl" :text="m.text" :w="m.w" :u="m.u" />
      </div>
    </nav>

    <div v-for="(bar, b) in toolbars" :key="b" class="toolbar">
      <template v-for="(c, i) in bar" :key="i">
        <i v-if="c.k === ':'" class="handle" :style="c.box" />
        <i v-else-if="c.k === '|'" class="sep" :style="c.box" />
        <i v-else-if="c.k === 'v'" class="tri t-down" :class="{ pale: (b === 0 && i < 31) || (b === 1 && i < 20) || b === 2 }" :style="c.box" />
        <div v-else-if="c.k === 'spin'" class="field greyed" :style="c.box">
          <Label class="lbl soft" text="12" :w="11" :size="10.6" />
          <b class="steps"><i class="tri t-up" /><i class="tri t-down" /></b>
        </div>
        <div v-else-if="c.k === 'combo'" class="field combo" :style="c.box">
          <Label class="lbl soft" text="px" :w="10.5" :size="10.6" /><i class="tri t-down pale" />
        </div>
        <div v-else class="cell" :class="{ on: active.includes(c.k) }" :style="c.box"><svg viewBox="0 0 24 24" v-html="I[c.k]" /></div>
      </template>
    </div>

    <main class="work">
      <aside class="side-left">
        <div class="phead"><Label class="lbl" text="Navegador" :w="60" /><svg class="pb" viewBox="0 0 24 24" v-html="I.float" /><svg class="pb" viewBox="0 0 24 24" v-html="I.close" /></div>
        <div class="ptools">
          <svg v-for="c in navTools" :key="c.k" viewBox="0 0 24 24" :style="c.box" v-html="I[c.k]" />
        </div>
        <div class="browser">
          <div class="view">
            <div class="list">
              <div class="row r0"><i class="tri t-down" /><svg viewBox="0 0 24 24" v-html="I.starf" /><Label class="lbl" text="Favoritos" :w="47.8" /></div>
              <div class="row r1"><i class="tri t-down" /><svg viewBox="0 0 24 24" v-html="I.folderb" /><Label class="lbl" text="C:\Users\gkdal\Desktop" :w="127.5" /></div>
              <div v-for="t in tree" :key="t[0]" class="row r2"><i class="tri t-right" /><svg viewBox="0 0 24 24" v-html="t[0].endsWith('lnk') ? I.folderl : I.folder" /><Label class="lbl" :text="t[0]" :w="t[1]" /></div>
            </div>
            <div class="vbar"><b class="btn"><i class="tri t-up" /></b><b class="thumb" /><b class="groove" /><b class="btn end"><i class="tri t-down" /></b></div>
          </div>
          <div class="hbar"><b class="btn"><i class="tri t-left" /></b><b class="thumb" /><b class="groove" /><b class="btn end"><i class="tri t-right" /></b><b class="nook" /></div>
        </div>
        <div class="split"><i /></div>
        <div class="phead low"><Label class="lbl" text="Camadas" :w="50" /><svg class="pb" viewBox="0 0 24 24" v-html="I.float" /><svg class="pb" viewBox="0 0 24 24" v-html="I.close" /></div>
        <div class="ptools two">
          <template v-for="c in layerTools" :key="c.k">
            <i v-if="c.k === 'v'" class="tri t-down pale" :style="c.box" />
            <svg v-else viewBox="0 0 24 24" :style="c.box" v-html="I[c.k]" />
          </template>
        </div>
        <div class="layers" />
      </aside>
      <div class="vsplit"><i /></div>
      <section class="canvas" />
      <aside class="side-right">
        <div class="phead"><Label class="lbl" text="Caixa de Ferramentas de processamento" :w="217.8" /><svg class="pb" viewBox="0 0 24 24" v-html="I.float" /><svg class="pb" viewBox="0 0 24 24" v-html="I.close" /></div>
        <div class="ptools">
          <template v-for="(c, i) in boxTools" :key="i">
            <i v-if="c.k === '|'" class="sep" :style="c.box" />
            <svg v-else viewBox="0 0 24 24" :style="c.box" v-html="I[c.k]" />
          </template>
        </div>
        <div class="find"><svg viewBox="0 0 24 24" v-html="I.mag" /></div>
        <div class="algs">
          <div v-for="(t, i) in tools" :key="i" class="row r3"><i class="tri t-right" /><template v-if="t[0]"><svg viewBox="0 0 24 24" v-html="I[toolIcon[t[0]] || 'qgis']" /><Label class="lbl" :text="t[0]" :w="t[1]" /></template></div>
        </div>
      </aside>
    </main>

    <footer class="status">
      <div class="field locator"><svg viewBox="0 0 24 24" v-html="I.mag" /><Label class="lbl ghost" text="Escreva para localizar (Ctrl+K)" :w="141" :size="10.9" /></div>
      <Label class="lbl s-ready" text="Pronto" :w="29.7" :size="10.6" />
      <div class="grow" />
      <Label class="lbl" text="Coordenada" :w="55.6" :size="10.6" />
      <div class="field coord"><Label class="lbl" text="1.057,0.750" :w="54.7" :size="10.6" /></div>
      <svg class="i-compass" viewBox="0 0 24 24" v-html="I.compass" />
      <Label class="lbl" text="Escala" :w="28.7" :size="10.6" />
      <div class="field scale"><Label class="lbl" text="1:1266546" :w="49.2" :size="10.6" /><b><i class="tri t-down" /></b></div>
      <svg class="i-lock" viewBox="0 0 24 24" preserveAspectRatio="none" v-html="I.lock" />
      <Label class="lbl" text="Lupa" :w="21" :size="10.6" />
      <div class="field zoomf"><Label class="lbl" text="100%" :w="26.3" :size="10.6" /><b class="steps"><i class="tri t-up" /><i class="tri t-down" /></b></div>
      <Label class="lbl s-rot" text="Rotação" :w="37" :size="10.6" />
      <div class="field rotf"><Label class="lbl" text="0,0 º" :w="22.3" :size="10.6" /><b class="steps"><i class="tri t-up" /><i class="tri t-down" /></b></div>
      <div class="tick"><svg viewBox="0 0 24 24" v-html="I.check" /></div>
      <Label class="lbl" text="Renderizar" :w="49.3" :size="10.6" />
      <svg class="i-crs" viewBox="0 0 24 24" v-html="I.crs" />
      <Label class="lbl" text="EPSG:4326" :w="50.7" :size="10.6" />
      <svg class="i-bubble" viewBox="0 0 24 24" v-html="I.bubble" />
    </footer>

    <footer class="taskbar">
      <div class="sys"><svg v-for="n in ['win', 'tsearch', 'cortana', 'tview']" :key="n" viewBox="0 0 24 24" v-html="I[n]" /></div>
      <div v-for="n in ['chrome', 'explorer', 'ai', 'qgis']" :key="n" class="app" :class="n"><svg viewBox="0 0 24 24" v-html="I[n]" /></div>
      <div class="grow" />
      <div class="tray"><svg v-for="n in ['chev', 'batt', 'wifi', 'mute', 'cloud']" :key="n" viewBox="0 0 24 24" v-html="I[n]" /></div>
      <div class="two-lines lang"><Label class="lbl" text="POR" :w="22.3" :size="11.6" /><Label class="lbl" text="PTB2" :w="26" :size="11.6" /></div>
      <div class="two-lines time"><Label class="lbl" text="16:38" :w="28" :size="11.6" /><Label class="lbl" text="08/07/2021" :w="60.8" :size="11.6" /></div>
      <div class="notes"><svg viewBox="0 0 24 24" preserveAspectRatio="none" v-html="I.note" /><span class="count">2</span></div>
      <div class="peek" />
    </footer>

    <div class="drop big">
      <div class="tab"><div class="face"><svg viewBox="0 0 24 24" v-html="I.pyfull" /><i class="tri t-down" /></div></div>
      <ul><li v-for="a in actions" :key="a[0]"><Label class="lbl" :text="a[0]" :w="a[1] * 2.007" :size="24.2" /></li></ul>
    </div>
    <div class="drop small">
      <div class="tab"><div class="face"><svg viewBox="0 0 24 24" v-html="I.pyfull" /><i class="tri t-down" /></div></div>
      <ul><li v-for="a in actions" :key="a[0]"><Label class="lbl" :text="a[0]" :w="a[1]" :size="12.1" /></li></ul>
    </div>
    <svg class="ink" viewBox="0 0 1568 882">
      <path fill-rule="evenodd" d="M475.200 83.100H527.300V127.900H1045.400V314.800H470.600V121.700H475.200zM481 88.700V127.900H476.800V309H1039.600V133.700H521.500V88.700z" />
      <path fill-rule="evenodd" d="M1199.300 153.500H1228V175.600H1486.200V271.700H1197V172.800H1199.300zM1204.900 159.300V178.400H1202.800V266H1480.600V181.400H1222V159.300z" />
      <path d="M1045 224.900H1198V229.200H1045z" />
    </svg>
  </div>
</template>

<style>
html, body { margin: 0; overflow: hidden; background: #fff; }
</style>

<style scoped>
.screen { position: relative; zoom: 2.6122449; width: 1568px; height: 882px; overflow: hidden; display: flex; flex-direction: column; background: #f7f7f7; color: #808080; font-family: "Open Sans", "Noto Sans", sans-serif; }
.screen *, .screen { box-sizing: border-box; }
.defs { position: absolute; width: 0; height: 0; }
svg { display: block; flex: none; overflow: visible; fill: none; }
b, i { display: block; flex: none; font-style: normal; }
.lbl { display: block; flex: none; white-space: pre; line-height: 16px; text-underline-offset: 1.5px; }
.grow { flex: 1; }

.tri { background: #aeaeae; }
.t-down { width: 6.4px; height: 4.4px; clip-path: polygon(0 0, 100% 0, 50% 100%); }
.t-up { width: 6.4px; height: 4.4px; clip-path: polygon(50% 0, 100% 100%, 0 100%); }
.t-right { width: 4px; height: 7.8px; clip-path: polygon(0 0, 100% 50%, 0 100%); }
.t-left { width: 4px; height: 7.8px; clip-path: polygon(100% 0, 100% 100%, 0 50%); }
.pale { background: #cfcfcf; }
.sep { width: 0.8px; height: 15px; background: #e9e9e9; }

.title { flex: none; height: 23.8px; background: #fff; display: flex; align-items: center; padding-left: 2px; }
.logo { width: 15.6px; height: 15.6px; margin-right: 5.3px; margin-top: -1px; }
.winbtns { width: 110px; height: 12px; margin-left: auto; margin-right: 16.5px; stroke: #808080; stroke-width: 0.8; }
.menubar { flex: none; height: 20.3px; display: flex; align-items: center; padding-top: 0.9px; border-bottom: 0.7px solid #ebebeb; }
.entry { flex: none; display: flex; }

.toolbar { flex: none; height: 31.85px; display: flex; align-items: center; background: linear-gradient(#fdfefd, #f7f7f6); border-bottom: 0.9px solid #dadada; }
.handle { height: 13.4px; background: repeating-linear-gradient(#dcdcdc 0 0.9px, transparent 0.9px 2.45px) left / 0.9px 100% no-repeat, repeating-linear-gradient(#dcdcdc 0 0.9px, transparent 0.9px 2.45px) right / 0.9px 100% no-repeat; }
.cell { flex: none; height: 24.6px; display: flex; align-items: center; justify-content: center; }
.cell svg { width: 19.6px; height: 19.6px; }
.cell.on { background: #efefef; border: 0.8px solid #d6d6d6; border-radius: 1.6px; }
.field { flex: none; display: flex; align-items: center; background: #fff; border: 0.8px solid #d6d6d6; border-radius: 1.8px; }
.toolbar .field { height: 17.6px; padding-left: 4px; }
.toolbar .combo { height: 19.2px; padding-right: 9px; background: linear-gradient(#fff, #fafafa); }
.combo .tri { margin-left: auto; }
.greyed { background: #f5f5f5; }
.soft { color: #acacac; }
.steps { margin-left: auto; width: 13.8px; align-self: stretch; border-left: 0.8px solid #d9d9d9; background: #fcfcfc; display: flex; flex-direction: column; align-items: center; justify-content: center; gap: 2.8px; border-radius: 0 1.6px 1.6px 0; }
.steps .tri { height: 4px; }

.work { flex: 1; min-height: 0; display: flex; }
.side-left { flex: none; width: 450.6px; display: flex; flex-direction: column; }
.phead { flex: none; height: 16.6px; display: flex; align-items: center; padding-left: 3.8px; }
.pb { width: 8.7px; height: 8.7px; margin-left: 3px; }
.phead .lbl { margin-right: auto; }
.side-left .pb:last-child { margin-right: 1.4px; }
.ptools { flex: none; height: 24.6px; display: flex; align-items: center; padding-bottom: 2px; }
.ptools svg { height: 13px; }
.browser { flex: none; height: 294.2px; border: 0.8px solid #dadada; background: #fff; display: flex; flex-direction: column; }
.view { flex: 1; min-height: 0; display: flex; }
.list { flex: 1; overflow: hidden; }
.row { height: 17.97px; display: flex; align-items: center; }
.r0 { padding-left: 7px; }
.r0 svg { width: 16.4px; height: 16.4px; margin: 0 5.8px 0 9.6px; }
.r1 { padding-left: 27.4px; background: #f6f6f6; }
.r1 svg { width: 15px; height: 14.5px; margin: 0 6px 0 10.6px; }
.r2 { padding-left: 49.2px; }
.r2 svg { width: 15.2px; height: 14.2px; margin: 0 6px 0 11.2px; }
.vbar { flex: none; width: 14.2px; border-left: 0.8px solid #dadada; background: #f1f1f1; display: flex; flex-direction: column; }
.btn { background: #fcfcfc; display: flex; align-items: center; justify-content: center; }
.vbar .btn { height: 13.4px; }
.vbar .thumb { height: 27.4px; background: #fcfcfc; border: solid #d9d9d9; border-width: 0.8px 0; }
.groove { flex: 1; }
.vbar .end { border-top: 0.8px solid #d9d9d9; }
.hbar { flex: none; height: 13.9px; border-top: 0.9px solid #dadada; background: #f1f1f1; display: flex; }
.hbar .btn { width: 13.6px; }
.hbar .thumb { width: 218px; border: solid #d9d9d9; border-width: 0 0.8px; background: linear-gradient(#fff, #f8f8f8); }
.hbar .end { border-left: 0.8px solid #d9d9d9; }
.nook { width: 13.8px; border-left: 0.8px solid #dadada; background: #f7f7f7; }
.split { flex: none; height: 5.8px; display: flex; align-items: center; justify-content: center; }
.split i { width: 13px; height: 0.8px; background: repeating-linear-gradient(90deg, #d6d6d6 0 1px, transparent 1px 2.4px); }
.low { height: 17px; }
.two { height: 24.5px; padding-bottom: 3px; }
.layers { flex: 1; border: 0.8px solid #dadada; background: #fff; }
.vsplit { flex: none; width: 6.5px; display: flex; align-items: center; justify-content: center; }
.vsplit i { width: 0.8px; height: 13px; margin-top: -12px; background: repeating-linear-gradient(#d6d6d6 0 1px, transparent 1px 2.4px); }
.canvas { flex: none; width: 714.7px; border: 0.8px solid #dadada; border-top: 0; background: #fff; }
.side-right { flex: 1; min-width: 0; display: flex; flex-direction: column; }
.side-right .phead { padding-left: 9.6px; height: 17px; }
.side-right .pb { margin-left: 2.6px; }
.side-right .pb:last-child { margin-right: 2px; }
.side-right .ptools { height: 24.2px; }
.find { flex: none; height: 19.2px; margin-left: 6px; border: 0.8px solid #d6d6d6; border-radius: 1.8px; background: #fff; display: flex; align-items: center; padding-left: 6px; }
.find svg { width: 12px; height: 12px; }
.algs { flex: 1; min-height: 0; margin-left: 6px; border: 0.8px solid #dadada; background: #fff; }
.r3 { padding-left: 8.2px; }
.r3 svg { width: 15px; height: 15px; margin: 0 5.9px 0 10.8px; }

.status { flex: none; height: 26.4px; display: flex; align-items: center; padding: 0 5.8px 0 3.8px; }
.status .field { height: 19px; }
.status .lbl { padding-top: 0.9px; }
.locator { width: 255px; padding-left: 5.5px; }
.locator svg { width: 12.4px; height: 12.4px; margin-right: 6px; }
.ghost { color: #bababa; }
.status .s-ready { margin-left: 6.5px !important; }
.coord { width: 76.1px; margin-left: 2.4px; justify-content: center; }
.i-compass { width: 16px; height: 16px; margin: 0 11.3px 0 3.7px; }
.scale { width: 75.3px; margin-left: 2.3px; padding-left: 3px; }
.scale b { margin-left: auto; width: 19px; align-self: stretch; display: flex; align-items: center; justify-content: center; background: #fbfbfb; border-radius: 0 1.6px 1.6px 0; }
.i-lock { width: 13.6px; height: 15.6px; margin: 0 8px 0 10px; }
.zoomf { width: 75.5px; margin-left: 2.4px; padding-left: 3.6px; }
.status .s-rot { margin-left: 7.3px !important; }
.rotf { width: 72.5px; margin-left: 6.6px; padding-left: 3.6px; }
.tick { flex: none; width: 13.5px; height: 13.6px; margin: 0 6px 0 5.3px; background: #fff; border: 0.8px solid #dcdcdc; display: flex; align-items: center; justify-content: center; }
.tick svg { width: 11px; height: 11px; }
.i-crs { width: 15.8px; height: 15px; margin: 0 4.8px 0 14.3px; }
.i-bubble { width: 16.2px; height: 16.2px; margin-left: 17.4px; }

.taskbar { flex: none; height: 40.8px; background: #8c8c8c; display: flex; color: #fff; align-items: stretch; }
.sys { display: flex; align-items: center; gap: 32.8px; padding: 0 0 0.4px 16.3px; width: 202px; flex: none; }
.sys svg { width: 16.2px; height: 16.2px; }
.app { flex: none; width: 41.7px; margin: 0 7.8px 0 1.3px; display: flex; align-items: center; justify-content: center; border-bottom: 2.8px solid #c4e8f2; padding: 1.4px 0.8px 0 0; }
.app svg { width: 22.8px; height: 22.8px; }
.app.qgis { width: 49.7px; margin: 0 0 0 -3px; background: #a3a3a3; }
.chrome { border-image: linear-gradient(90deg, #c4e8f2 80%, #abd9df 80%) 1; }
.tray { display: flex; align-items: center; gap: 8.4px; }
.tray svg { width: 16.2px; height: 16.2px; }
.two-lines { flex: none; display: flex; flex-direction: column; align-items: center; padding-top: 3.2px; gap: 2.2px; }
.lang { width: 27px; margin-left: 9.5px; }
.time { width: 63px; margin-left: 10.6px; }
.notes { position: relative; flex: none; width: 40.8px; margin-left: 6.1px; background: #949494; }
.notes svg { width: 16.4px; height: 16.6px; margin: 12.2px 0 0 12.6px; }
.count { position: absolute; left: 20.3px; top: 19.8px; width: 16.6px; height: 16.6px; border: 1px solid #c4c4c4; border-radius: 50%; background: #8f8f8f; font-size: 11px; line-height: 14.4px; text-align: center; font-weight: 600; }
.peek { flex: none; width: 5px; margin-left: 8.2px; border-left: 0.8px solid #bdbdbd; }

.ink { position: absolute; inset: 0; width: 1568px; height: 882px; fill: #000; }
.drop { position: absolute; color: #000; }
.tab { position: absolute; background: #f0f0f0; }
.face { width: 88%; height: 100%; background: #dcdcdc; border-right: 1.3px solid #a8a8a8; border-bottom: 1.6px solid #a0a0a0; position: relative; }
.face svg, .face .tri { position: absolute; }
.face .tri { background: #4a4a4a; }
ul { list-style: none; margin: 0; padding: 0; display: flex; flex-direction: column; background: #fff; height: 100%; overflow: hidden; }
li { flex: none; display: flex; align-items: center; }
li:last-child { background: #1d73bb; color: #f2f6fb; border-top: 1.2px solid #4fa0dc; }
.big { left: 476.8px; top: 127.9px; width: 562.8px; height: 181.1px; }
.big .tab { left: 4.2px; top: -39.2px; width: 40.5px; height: 39.2px; }
.big .face { border-top: 2px solid #aaa; border-radius: 0 3px 0 0; }
.big .face svg { left: 3.4px; top: 5.5px; width: 24px; height: 24.5px; }
.big .face .tri { left: 16.4px; top: 22.2px; width: 14.8px; height: 8.2px; }
.big ul { border-left: 1.2px solid #999; }
.big li { height: 45.9px; padding: 0.8px 0 0 53.6px; }
.big li .lbl { line-height: 34px; }
.big li:first-child { height: 46px; padding-top: 2.2px; }
.big li:last-child { height: 47px; margin-left: -1.2px; padding: 0 0 1.2px 54.8px; }
.small { left: 1202.8px; top: 178.4px; width: 277.8px; height: 87.6px; }
.small .tab { left: 2.1px; top: -19.1px; width: 17.1px; height: 19.1px; }
.small .face { width: 92%; }
.small .face svg { left: 0.9px; top: 2.6px; width: 12px; height: 11.5px; }
.small .face .tri { left: 7.2px; top: 10.6px; width: 7.2px; height: 3.8px; }
.small li { height: 22.95px; padding: 0.4px 0 0 26.2px; }
.small li:first-child { height: 21.4px; }
.small li:last-child { height: 24px; border-top-width: 0.9px; padding: 0 0 0.6px 26.2px; }
</style>
